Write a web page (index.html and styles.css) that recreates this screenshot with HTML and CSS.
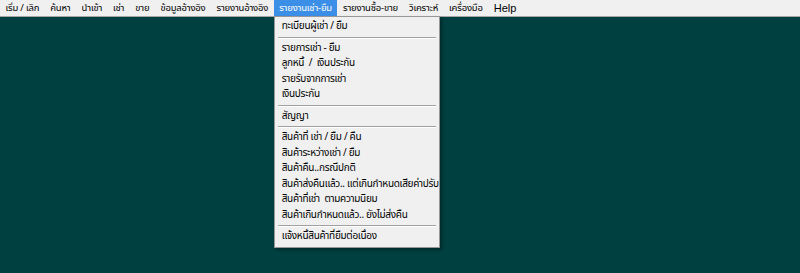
FILE: index.html
```html
<!DOCTYPE html>
<html lang="th">
<head>
  <meta charset="UTF-8">
  <title>เช่า - ยืม</title>
  <link rel="stylesheet" href="styles.css">
</head>
<body>
  <nav class="menubar">
    <div class="menubar__item">เริ่ม / เลิก</div>
    <div class="menubar__item">ค้นหา</div>
    <div class="menubar__item">นำเข้า</div>
    <div class="menubar__item">เช่า</div>
    <div class="menubar__item">ขาย</div>
    <div class="menubar__item">ข้อมูลอ้างอิง</div>
    <div class="menubar__item">รายงานอ้างอิง</div>
    <div class="menubar__item menubar__item--open">รายงานเช่า-ยืม
      <ul class="dropdown">
        <li class="dropdown__item">ทะเบียนผู้เช่า / ยืม</li>
        <li class="dropdown__sep"></li>
        <li class="dropdown__item">รายการเช่า - ยืม</li>
        <li class="dropdown__item">ลูกหนี้&nbsp; / &nbsp;เงินประกัน</li>
        <li class="dropdown__item">รายรับจากการเช่า</li>
        <li class="dropdown__item">เงินประกัน</li>
        <li class="dropdown__sep"></li>
        <li class="dropdown__item">สัญญา</li>
        <li class="dropdown__sep"></li>
        <li class="dropdown__item">สินค้าที่ เช่า / ยืม / คืน</li>
        <li class="dropdown__item">สินค้าระหว่างเช่า / ยืม</li>
        <li class="dropdown__item">สินค้าคืน..กรณีปกติ</li>
        <li class="dropdown__item">สินค้าส่งคืนแล้ว.. แต่เกินกำหนดเสียค่าปรับ</li>
        <li class="dropdown__item">สินค้าที่เช่า&nbsp; ตามความนิยม</li>
        <li class="dropdown__item">สินค้าเกินกำหนดแล้ว.. ยังไม่ส่งคืน</li>
        <li class="dropdown__sep"></li>
        <li class="dropdown__item">แจ้งหนี้สินค้าที่ยืมต่อเนื่อง</li>
      </ul>
    </div>
    <div class="menubar__item">รายงานซื้อ-ขาย</div>
    <div class="menubar__item">วิเคราะห์</div>
    <div class="menubar__item">เครื่องมือ</div>
    <div class="menubar__item menubar__item--latin">Help</div>
  </nav>
  <main class="desk"></main>
</body>
</html>
```

FILE: styles.css
```css
* {
  box-sizing: border-box;
  margin: 0;
  padding: 0;
}
html, body {
  height: 100%;
}
body {
  display: flex;
  flex-direction: column;
  background: #004040;
  font-family: Tahoma, "Noto Sans Thai", "Noto Sans", sans-serif;
  font-size: 11px;
  color: #000;
}

/* Menu bar */

.menubar {
  display: flex;
  height: 17px;
  padding-left: 0;
  background: #f0f0f0;
  border-bottom: 1px solid #aaa5a5;
  font-size: 9.5px;
  letter-spacing: -0.2px;
}
.menubar__item {
  position: relative;
  height: 16px;
  line-height: 16px;
  padding: 0 5.5px;
  white-space: nowrap;
}
.menubar__item--open {
  background: #3c8fe6;
  color: #fff;
}
.menubar__item--latin {
  font-family: "Liberation Sans", Arial, sans-serif;
  font-size: 11px;
  letter-spacing: 0;
}

/* Dropdown */

.dropdown {
  position: absolute;
  top: 16px;
  left: 0;
  width: 166px;
  padding: 2px 2px;
  list-style: none;
  background: #f0f0f0;
  color: #000;
  border: 1px solid #979797;
  box-shadow: 2px 2px 3px rgba(0, 0, 0, 0.35);
  font-size: 10px;
  letter-spacing: -0.3px;
}
.dropdown__item {
  height: 15.5px;
  line-height: 15.5px;
  padding-left: 5px;
  white-space: nowrap;
}
.dropdown__sep {
  height: 6px;
  margin: 0 1px;
  position: relative;
}
.dropdown__sep::after {
  content: "";
  position: absolute;
  left: 0;
  right: 0;
  top: 2px;
  border-top: 1px solid #a0a0a0;
  border-bottom: 1px solid #ffffff;
}

.desk {
  flex: 1;
}
```
